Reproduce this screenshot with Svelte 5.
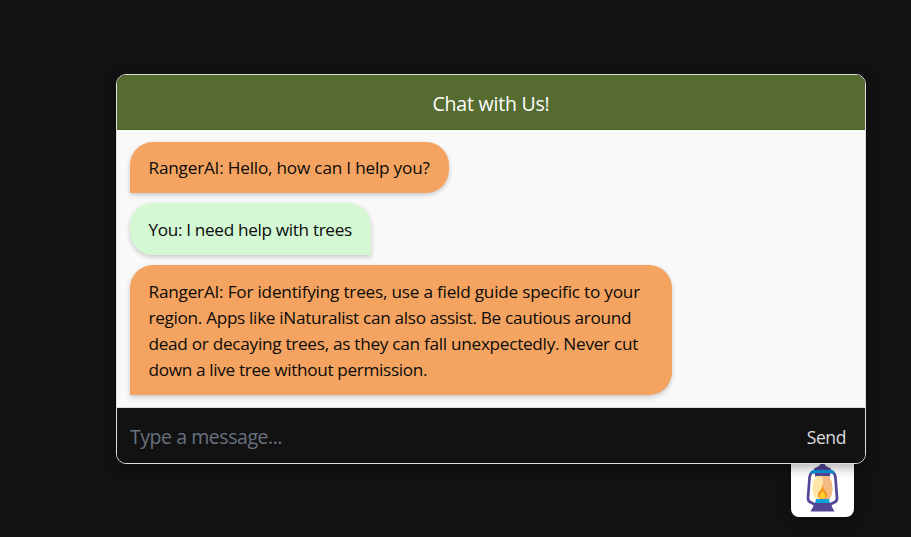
<script>
  const messages = [
    { from: 'bot', lines: [{ text: 'RangerAI: Hello, how can I help you?', ls: -0.21 }] },
    { from: 'user', lines: [{ text: 'You: I need help with trees', ls: -0.34 }] },
    {
      from: 'bot',
      lines: [
        { text: 'RangerAI: For identifying trees, use a field guide specific to your', ls: -0.22 },
        { text: 'region. Apps like iNaturalist can also assist. Be cautious around', ls: -0.32 },
        { text: 'dead or decaying trees, as they can fall unexpectedly. Never cut', ls: -0.285 },
        { text: 'down a live tree without permission.', ls: -0.34 }
      ]
    }
  ];
</script>

<main>
  <section class="chat">
    <header><span>Chat with Us!</span></header>
    <div class="messages">
      {#each messages as message}
        <div class="bubble {message.from}">
          {#each message.lines as line}
            <span style="letter-spacing: {line.ls}px">{line.text}</span>
          {/each}
        </div>
      {/each}
    </div>
    <footer>
      <input type="text" placeholder="Type a message..." />
      <button class="send">Send</button>
    </footer>
  </section>
  <button class="launcher" aria-label="Toggle chat">
    <svg width="33" height="48" viewBox="0 0 33 48">
      <path d="M7 8Q4 9 3.500 14L2 34Q2 37.500 5 38.500L10 41M26 8Q29 9 29.500 14L31 34Q31 37.500 28 38.500L23 41" fill="none" stroke="#524596" stroke-width="2.700" />
      <path d="M14.500 0h4l1.500 2 5 2.500v2H8v-2L13 2z" fill="#524596" />
      <path d="M4 9Q5 6 8 6h17q3 0 4 3l-3 .5H7z" fill="#0795d7" />
      <path d="M8.500 9h16l-1 4h-14z" fill="#524596" />
      <path d="M10 12h13q3.500 6 3.500 12 0 7-3.500 12H10q-3.500-5-3.500-12 0-6 3.500-12z" fill="#ffe6a6" />
      <path d="M16.500 12H23q3.500 6 3.500 12 0 7-3.500 12h-6.500z" fill="#f5b982" />
      <path d="M16.500 21q.5 4 3.500 7 1.500 1.500 1 4-.8 3-4.500 3t-4.500-3q-.5-2.500 1-4 3-3 3.500-7z" fill="#f7941d" />
      <path d="M16.500 27q3.500 4 2.700 6-.7 1.500-2.700 1.500T13.800 33q-.8-2 2.700-6z" fill="#ffd02f" />
      <path d="M10 35h13l1 4.500H9z" fill="#12a0d8" />
      <path d="M8 39h17l1 4 2.500 4.500h-24L7 43z" fill="#524596" />
    </svg>
  </button>
</main>

<style>
  :global(body) {
    background: #121212;
  }
  main {
    position: relative;
    box-sizing: border-box;
    width: 911px;
    height: 537px;
    padding: 74px 45px 0 116px;
    overflow: hidden;
    font-family: 'Open Sans', 'Noto Sans', sans-serif;
  }
  .chat {
    position: relative;
    z-index: 1;
    box-sizing: border-box;
    display: flex;
    flex-direction: column;
    height: 390px;
    border: 1px solid #ddd;
    border-radius: 10px;
    overflow: hidden;
    background: #121212;
    box-shadow: 0 4px 12px rgba(0, 0, 0, 0.3);
  }
  header {
    box-sizing: border-box;
    flex: none;
    height: 55px;
    padding-top: 3px;
    display: flex;
    align-items: center;
    justify-content: center;
    background: #556b2f;
    border-bottom: 1px solid #4b5f29;
    color: #fff;
    font-size: 19.5px;
    letter-spacing: -0.2px;
  }
  .messages {
    flex: 1;
    display: flex;
    flex-direction: column;
    align-items: flex-start;
    gap: 10px;
    padding: 12px 13px;
    background: #f9f9f9;
  }
  .bubble {
    box-sizing: border-box;
    padding: 13.4px 18px 12.1px 18.5px;
    width: 319px;
    color: #0b0b0b;
    font-size: 17.2px;
    line-height: 26px;
    box-shadow: 0 2px 5px rgba(0, 0, 0, 0.2);
  }
  .bubble span {
    display: block;
    white-space: nowrap;
  }
  .bot {
    background: #f4a460;
    border-radius: 23px 23px 23px 0;
  }
  .bubble:last-child {
    width: 542px;
    padding-top: 14px;
  }
  .user {
    width: 241px;
    background: #d4f8d4;
    border-radius: 23px 23px 0 23px;
  }
  footer {
    box-sizing: border-box;
    flex: none;
    height: 56px;
    display: flex;
    align-items: center;
    justify-content: space-between;
    padding: 2px 19px 0 13px;
    border-top: 1px solid #ddd;
    background: #121212;
  }
  input {
    flex: 1;
    padding: 0;
    border: 0;
    outline: 0;
    background: transparent;
    font: 19.500px 'Open Sans', 'Noto Sans', sans-serif;
    letter-spacing: -0.45px;
  }
  input::placeholder {
    color: #68717f;
    opacity: 1;
  }
  button {
    padding: 0;
    border: 0;
  }
  .send {
    background: transparent;
    color: #ddd;
    font: 17.500px 'Open Sans', 'Noto Sans', sans-serif;
    letter-spacing: -0.4px;
  }
  .launcher {
    position: absolute;
    left: 791px;
    top: 453px;
    width: 63px;
    height: 64px;
    display: flex;
    justify-content: center;
    padding-top: 11px;
    border-radius: 8px;
    background: #fff;
    box-shadow: 0 4px 12px rgba(0, 0, 0, 0.3);
  }
</style>
